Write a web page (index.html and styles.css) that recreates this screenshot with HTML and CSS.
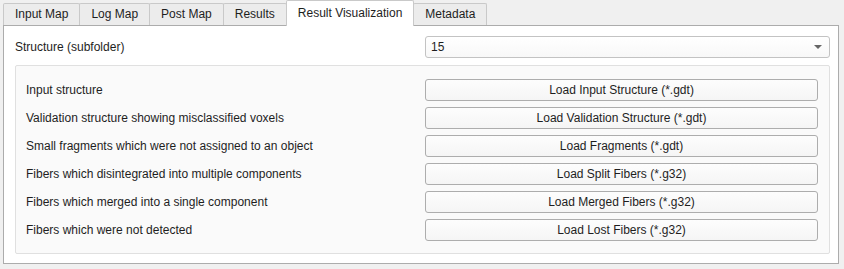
FILE: index.html
```html
<!DOCTYPE html>
<html lang="en">

<head>
    <meta charset="UTF-8">
    <meta name="viewport" content="width=device-width, initial-scale=1.0">
    <title>Result Visualization</title>
    <link rel="stylesheet" href="styles.css">
</head>

<body>
    <div class="tab-widget">
        <div class="tab-bar">
            <div class="tab">Input Map</div>
            <div class="tab">Log Map</div>
            <div class="tab">Post Map</div>
            <div class="tab">Results</div>
            <div class="tab active">Result Visualization</div>
            <div class="tab">Metadata</div>
        </div>

        <div class="tab-page">
            <div class="structure-row">
                <label class="structure-label">Structure (subfolder)</label>
                <div class="combo">
                    <span>15</span>
                    <span class="combo-arrow"></span>
                </div>
            </div>

            <div class="group-box">
                <div class="load-row">
                    <span class="load-label">Input structure</span>
                    <button class="load-button">Load Input Structure (*.gdt)</button>
                </div>
                <div class="load-row">
                    <span class="load-label">Validation structure showing misclassified voxels</span>
                    <button class="load-button">Load Validation Structure (*.gdt)</button>
                </div>
                <div class="load-row">
                    <span class="load-label">Small fragments which were not assigned to an object</span>
                    <button class="load-button">Load Fragments (*.gdt)</button>
                </div>
                <div class="load-row">
                    <span class="load-label">Fibers which disintegrated into multiple components</span>
                    <button class="load-button">Load Split Fibers (*.g32)</button>
                </div>
                <div class="load-row">
                    <span class="load-label">Fibers which merged into a single component</span>
                    <button class="load-button">Load Merged Fibers (*.g32)</button>
                </div>
                <div class="load-row">
                    <span class="load-label">Fibers which were not detected</span>
                    <button class="load-button">Load Lost Fibers (*.g32)</button>
                </div>
            </div>
        </div>
    </div>
</body>

</html>
```

FILE: styles.css
```css
body,
html {
    margin: 0;
    height: 100%;
    font-family: "Liberation Sans", Arial, sans-serif;
    font-size: 12px;
    color: #1e1e1e;
    background-color: #f0f0f0;
}

.tab-widget {
    padding: 1px 5px 4px 3px;
}

.tab-bar {
    display: flex;
    align-items: flex-end;
    height: 24px;
}

.tab {
    height: 21px;
    line-height: 21px;
    padding: 0 11px;
    border: 1px solid #c9c9c9;
    border-bottom: none;
    border-radius: 2px 2px 0 0;
    margin-right: -1px;
    background-color: #ececec;
}

.tab.active {
    height: 25px;
    line-height: 25px;
    background-color: #fff;
    position: relative;
    z-index: 1;
    margin-bottom: -1px;
}

.tab-page {
    border: 1px solid #acacac;
    background-color: #fff;
    padding: 10px 8px 9px 11px;
}

.structure-row {
    display: flex;
    align-items: center;
    margin-bottom: 7px;
}

.structure-label {
    flex: 1;
}

.combo {
    width: 393px;
    height: 20px;
    padding: 0 5px;
    display: flex;
    align-items: center;
    justify-content: space-between;
    border: 1px solid #c3c3c3;
    border-radius: 3px;
    background: linear-gradient(#fff, #f8f8f8);
}

.combo-arrow {
    width: 0;
    height: 0;
    margin-right: 2px;
    border-left: 4px solid transparent;
    border-right: 4px solid transparent;
    border-top: 4px solid #666;
}

.group-box {
    border: 1px solid #e0e0e0;
    border-radius: 2px;
    background-color: #fafafa;
    padding: 13px 11px 12px 10px;
    display: flex;
    flex-direction: column;
    gap: 6px;
}

.load-row {
    display: flex;
    align-items: center;
}

.load-label {
    flex: 1;
}

.load-button {
    width: 393px;
    height: 22px;
    padding: 0;
    font-family: inherit;
    font-size: 12px;
    color: #1e1e1e;
    border: 1px solid #adadad;
    border-radius: 3px;
    background: linear-gradient(#fdfdfd, #f5f5f5);
}
```
